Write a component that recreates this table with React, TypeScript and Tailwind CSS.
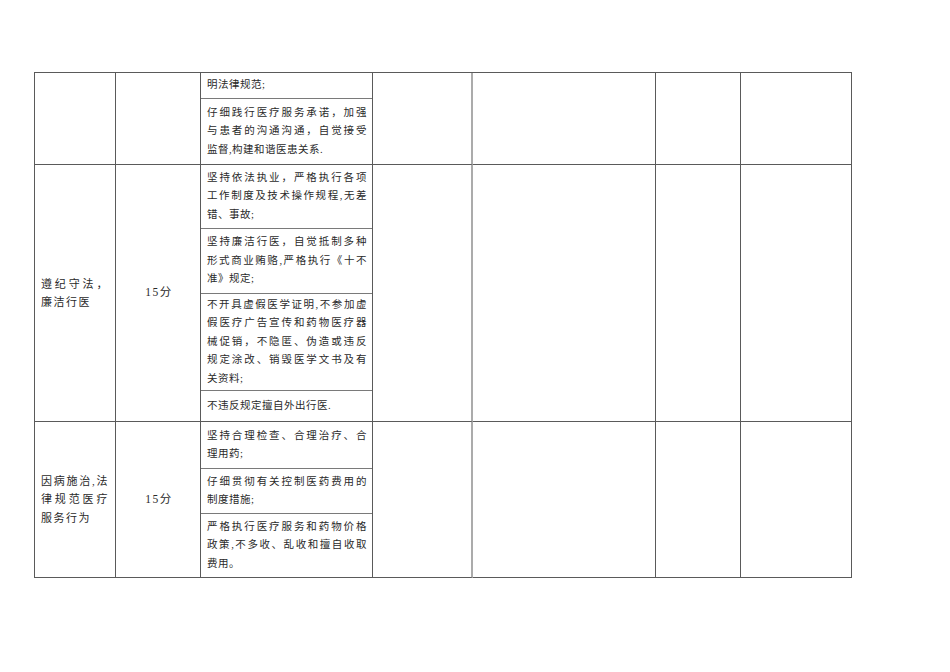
import React from "react";

type Line = [string, boolean];

interface Item {
  h: string;
  lines: Line[];
}

interface Section {
  title: Line[];
  score: string;
  items: Item[];
}

const sections: Section[] = [
  {
    title: [],
    score: "",
    items: [
      { h: "h-[26px]", lines: [["明法律规范;", false]] },
      {
        h: "h-[65px]",
        lines: [
          ["仔细践行医疗服务承诺，加强", true],
          ["与患者的沟通沟通，自觉接受", true],
          ["监督,构建和谐医患关系.", false],
        ],
      },
    ],
  },
  {
    title: [
      ["遵纪守法，", true],
      ["廉洁行医", false],
    ],
    score: "15分",
    items: [
      {
        h: "h-[64px]",
        lines: [
          ["坚持依法执业，严格执行各项", true],
          ["工作制度及技术操作规程,无差", true],
          ["错、事故;", false],
        ],
      },
      {
        h: "h-[65px]",
        lines: [
          ["坚持廉洁行医，自觉抵制多种", true],
          ["形式商业贿赂,严格执行《十不", true],
          ["准》规定;", false],
        ],
      },
      {
        h: "h-[97px]",
        lines: [
          ["不开具虚假医学证明,不参加虚", true],
          ["假医疗广告宣传和药物医疗器", true],
          ["械促销，不隐匿、伪造或违反", true],
          ["规定涂改、销毁医学文书及有", true],
          ["关资料;", false],
        ],
      },
      { h: "h-[30px]", lines: [["不违反规定擅自外出行医.", false]] },
    ],
  },
  {
    title: [
      ["因病施治,法", true],
      ["律规范医疗", true],
      ["服务行为", false],
    ],
    score: "15分",
    items: [
      {
        h: "h-[47px]",
        lines: [
          ["坚持合理检查、合理治疗、合", true],
          ["理用药;", false],
        ],
      },
      {
        h: "h-[45px]",
        lines: [
          ["仔细贯彻有关控制医药费用的", true],
          ["制度措施;", false],
        ],
      },
      {
        h: "h-[63px]",
        lines: [
          ["严格执行医疗服务和药物价格", true],
          ["政策,不多收、乱收和擅自收取", true],
          ["费用。", false],
        ],
      },
    ],
  },
];

function TextLine({ line }: { line: Line }) {
  const [text, full] = line;
  return (
    <div
      className={
        full
          ? "whitespace-nowrap text-justify [text-align-last:justify]"
          : "whitespace-nowrap"
      }
    >
      {text}
    </div>
  );
}

export default function App() {
  return (
    <div
      className="w-[950px] h-[672px] bg-white pt-[72px] pl-[34px] text-[#2a2a2a]"
      style={{ fontFamily: '"Liberation Serif", "Noto Sans CJK SC", serif' }}
    >
      <div className="w-[818px] border-t border-l border-[#5a5a5a]">
        {sections.map((s, i) => (
          <div key={i} className="flex">
            <div className="w-[81px] border-r border-b border-[#5a5a5a] px-[6px] flex flex-col justify-center text-[11px] leading-[18.5px] tracking-[1.5px]">
              {s.title.map((l, j) => (
                <TextLine key={j} line={l} />
              ))}
            </div>
            <div className="w-[85px] border-r border-b border-[#5a5a5a] flex items-center justify-center text-[11.5px] tracking-[1.5px] pl-[2px]">
              {s.score}
            </div>
            <div className="w-[172px] border-r border-b border-[#5a5a5a] flex flex-col">
              {s.items.map((it, j) => (
                <div
                  key={j}
                  className={`${it.h} ${
                    j < s.items.length - 1 ? "border-b border-[#7a7a7a]" : ""
                  } flex flex-col justify-center pl-[6px] pr-[5px] text-[10.5px] leading-[18.5px] tracking-[0.5px]`}
                >
                  {it.lines.map((l, k) => (
                    <TextLine key={k} line={l} />
                  ))}
                </div>
              ))}
            </div>
            <div className="w-[100px] border-r-2 border-r-[#ababab] border-b border-b-[#5a5a5a]" />
            <div className="w-[183px] border-r border-b border-[#5a5a5a]" />
            <div className="w-[85px] border-r border-b border-[#5a5a5a]" />
            <div className="w-[111px] border-r border-b border-[#5a5a5a]" />
          </div>
        ))}
      </div>
    </div>
  );
}
